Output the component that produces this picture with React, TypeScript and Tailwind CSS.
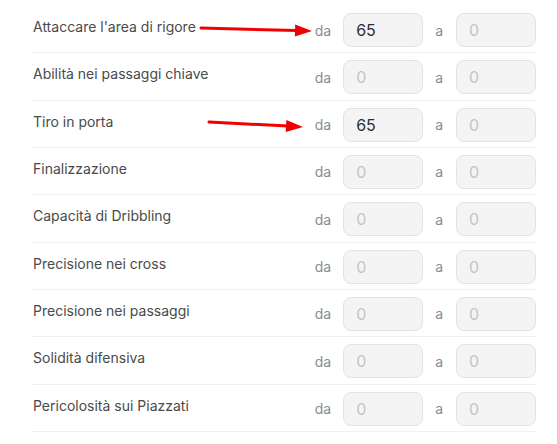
const ROWS: { label: string; from: string }[] = [
  { label: "Attaccare l'area di rigore", from: "65" },
  { label: "Abilità nei passaggi chiave", from: "" },
  { label: "Tiro in porta", from: "65" },
  { label: "Finalizzazione", from: "" },
  { label: "Capacità di Dribbling", from: "" },
  { label: "Precisione nei cross", from: "" },
  { label: "Precisione nei passaggi", from: "" },
  { label: "Solidità difensiva", from: "" },
  { label: "Pericolosità sui Piazzati", from: "" },
];

function RangeBox({ value }: { value: string }) {
  return (
    <div className="w-[80px] h-[34px] rounded-[8px] border border-[#e3e3e6] bg-[#f4f4f5] flex items-center pl-[12px] text-[16px]">
      {value ? (
        <span className="text-[#2e2e2e]">{value}</span>
      ) : (
        <span className="text-[#c4c4c4]">0</span>
      )}
    </div>
  );
}

function Arrow({ x1, y1, x2, y2 }: { x1: number; y1: number; x2: number; y2: number }) {
  const ang = Math.atan2(y2 - y1, x2 - x1);
  const len = 17;
  const half = 6;
  const bx = x2 - len * Math.cos(ang);
  const by = y2 - len * Math.sin(ang);
  const px = -Math.sin(ang) * half;
  const py = Math.cos(ang) * half;
  return (
    <g>
      <line x1={x1} y1={y1} x2={bx + 2} y2={by} stroke="#f00000" strokeWidth={3} strokeLinecap="round" />
      <polygon points={`${x2},${y2} ${bx + px},${by + py} ${bx - px},${by - py}`} fill="#f00000" />
    </g>
  );
}

export default function App() {
  return (
    <div className="relative w-[557px] h-[444px] bg-white font-['Inter','Liberation_Sans',sans-serif]">
      <div className="ml-[32px] w-[504px] pt-[6px]">
        {ROWS.map((row) => (
          <div
            key={row.label}
            className="flex items-start pt-[7px] pb-[5.33px] border-b border-[#f1f1f1]"
          >
            <div className="flex-1 mt-[4px] text-[14px] leading-5 text-[#4a4a4a] pl-px">{row.label}</div>
            <div className="flex items-center">
              <span className="text-[14px] text-[#8c8c8c] mr-[12px]">da</span>
              <RangeBox value={row.from} />
              <span className="text-[14px] text-[#8c8c8c] ml-[12px] mr-[13px]">a</span>
              <RangeBox value="" />
            </div>
          </div>
        ))}
      </div>
      <svg className="absolute inset-0 pointer-events-none" width={557} height={444}>
        <Arrow x1={201} y1={28} x2={312} y2={31} />
        <Arrow x1={209} y1={122} x2={303} y2={127} />
      </svg>
    </div>
  );
}
